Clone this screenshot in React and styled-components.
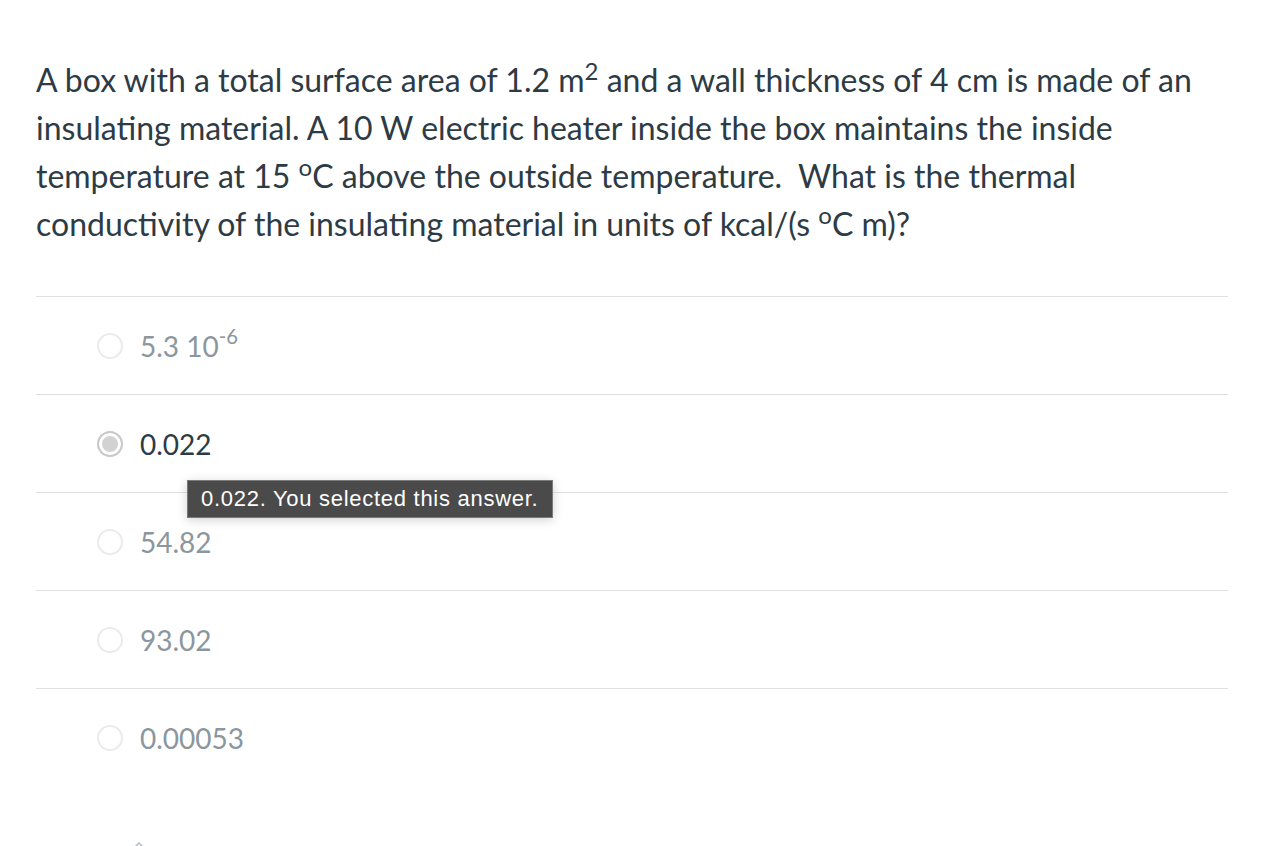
import React from 'react';
import styled, { createGlobalStyle } from 'styled-components';

const GlobalStyle = createGlobalStyle`
  body {
    margin: 0;
    background: #fff;
    font-family: Lato, "Open Sans", sans-serif;
    color: #2d3b45;
  }
`

const Page = styled.div`
  padding: 56px 34px 0 36px;
  width: 1192px;
`

const Question = styled.p`
  margin: 0 0 48px 0;
  font-size: 32px;
  line-height: 48px;
  color: #2d3b45;

  sup {
    font-size: 0.75em;
    line-height: 0;
  }
`

const AnswerList = styled.div`
  display: flex;
  flex-direction: column;
`

const AnswerRow = styled.div`
  position: relative;
  display: flex;
  align-items: center;
  height: 97px;
  border-top: 1px solid #e0e0e0;
  padding-left: 61px;
`

const Radio = styled.span`
  box-sizing: border-box;
  width: 26px;
  height: 26px;
  border-radius: 50%;
  border: 2px solid ${p => (p.checked ? '#c9c9c9' : '#ebebeb')};
  background: ${p => (p.checked ? '#d2d2d2' : '#fff')};
  box-shadow: ${p => (p.checked ? 'inset 0 0 0 3px #fff' : 'none')};
  margin-right: 17px;
`

const AnswerText = styled.span`
  font-size: 28px;
  color: ${p => (p.selected ? '#2d3b45' : '#8b969e')};

  sup {
    font-size: 0.72em;
    line-height: 0;
    position: relative;
    top: -2px;
  }
`

const Tooltip = styled.div`
  position: absolute;
  left: 151px;
  top: 85px;
  box-sizing: border-box;
  height: 38px;
  padding: 0 14px 0 13px;
  display: flex;
  align-items: center;
  background: #4a4a4a;
  border: 1px solid #7a7a7a;
  box-shadow: 0 2px 10px rgba(0, 0, 0, 0.18);
  color: #fff;
  font-family: "Liberation Sans", Arial, sans-serif;
  font-size: 22px;
  letter-spacing: 0.72px;
  white-space: nowrap;
  z-index: 2;
`

const Caret = styled.div`
  padding: 48px 0 0 95px;
`

const answers = [
  { id: 1, text: <>5.3 10<sup>-6</sup></> },
  { id: 2, text: '0.022', selected: true },
  { id: 3, text: '54.82' },
  { id: 4, text: '93.02' },
  { id: 5, text: '0.00053' },
]

export default function App() {
  return (
    <>
      <GlobalStyle />
      <Page>
        <Question>
          A box with a total surface area of 1.2 m<sup>2</sup> and a wall thickness of 4 cm is made of an
          insulating material. A 10 W electric heater inside the box maintains the inside
          temperature at 15 <sup>o</sup>C above the outside temperature.&nbsp; What is the thermal
          conductivity of the insulating material in units of kcal/(s <sup>o</sup>C m)?
        </Question>
        <AnswerList>
          {answers.map(a => (
            <AnswerRow key={a.id}>
              <Radio checked={a.selected} />
              <AnswerText selected={a.selected}>{a.text}</AnswerText>
              {a.selected && <Tooltip>0.022. You selected this answer.</Tooltip>}
            </AnswerRow>
          ))}
        </AnswerList>
        <Caret>
          <svg width="16" height="10" viewBox="0 0 16 10">
            <path d="M2 9 L8 3 L14 9" fill="none" stroke="#b4bcc4" strokeWidth="1.5" />
          </svg>
        </Caret>
      </Page>
    </>
  )
}
